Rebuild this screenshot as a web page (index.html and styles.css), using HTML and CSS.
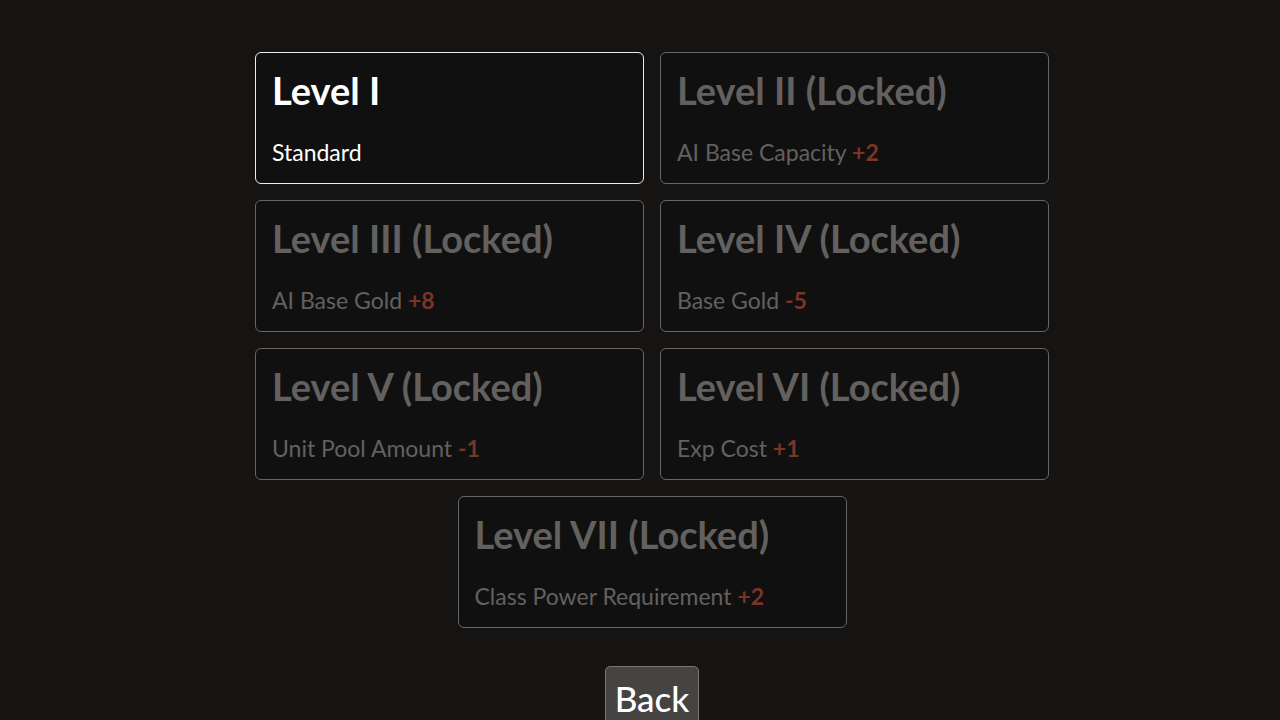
FILE: index.html
```html
<!DOCTYPE html>
<html lang="en">
<head>
  <meta charset="UTF-8">
  <title>Difficulty</title>
  <link rel="stylesheet" href="styles.css">
</head>
<body>
<div class="levels">
  <div class="level selected">
    <div class="level-title">Level I</div>
    <div class="level-desc">Standard</div>
  </div>
  <div class="level">
    <div class="level-title">Level II (Locked)</div>
    <div class="level-desc">AI Base Capacity <span class="mod">+2</span></div>
  </div>
  <div class="level">
    <div class="level-title">Level III (Locked)</div>
    <div class="level-desc">AI Base Gold <span class="mod">+8</span></div>
  </div>
  <div class="level">
    <div class="level-title">Level IV (Locked)</div>
    <div class="level-desc">Base Gold <span class="mod">-5</span></div>
  </div>
  <div class="level">
    <div class="level-title">Level V (Locked)</div>
    <div class="level-desc">Unit Pool Amount <span class="mod">-1</span></div>
  </div>
  <div class="level">
    <div class="level-title">Level VI (Locked)</div>
    <div class="level-desc">Exp Cost <span class="mod">+1</span></div>
  </div>
  <div class="level">
    <div class="level-title">Level VII (Locked)</div>
    <div class="level-desc">Class Power Requirement <span class="mod">+2</span></div>
  </div>
</div>
<div class="actions">
  <button class="back-btn">Back</button>
</div>
</body>
</html>
```
FILE: styles.css
```css
body {
  margin: 0;
  padding: 52px 0 0 24px;
  background-color: #161412;
  font-family: Lato, "Open Sans", sans-serif;
  overflow: hidden;
}
.levels {
  width: 794px;
  margin: 0 auto;
  display: flex;
  flex-wrap: wrap;
  justify-content: center;
  gap: 16px;
}
.level {
  width: 389px;
  height: 132px;
  box-sizing: border-box;
  padding: 14px 16px 0 16px;
  background-color: #111010;
  border: 1px solid #676563;
  border-radius: 6px;
  color: #63615f;
}
.level.selected {
  border-color: #ececec;
  color: #ffffff;
}
.level-title {
  font-size: 38px;
  font-weight: 700;
  line-height: 46px;
}
.level-desc {
  margin-top: 25px;
  font-size: 23px;
  line-height: 28px;
}
.mod {
  color: #7a3527;
  font-weight: 700;
}
.actions {
  display: flex;
  justify-content: center;
  margin-top: 38px;
}
.back-btn {
  font-family: Lato, "Open Sans", sans-serif;
  font-size: 35px;
  font-weight: 500;
  color: #ffffff;
  background-color: #454443;
  border: 1px solid #777;
  border-radius: 5px;
  padding: 10px 9px 6px 9px;
}
```
